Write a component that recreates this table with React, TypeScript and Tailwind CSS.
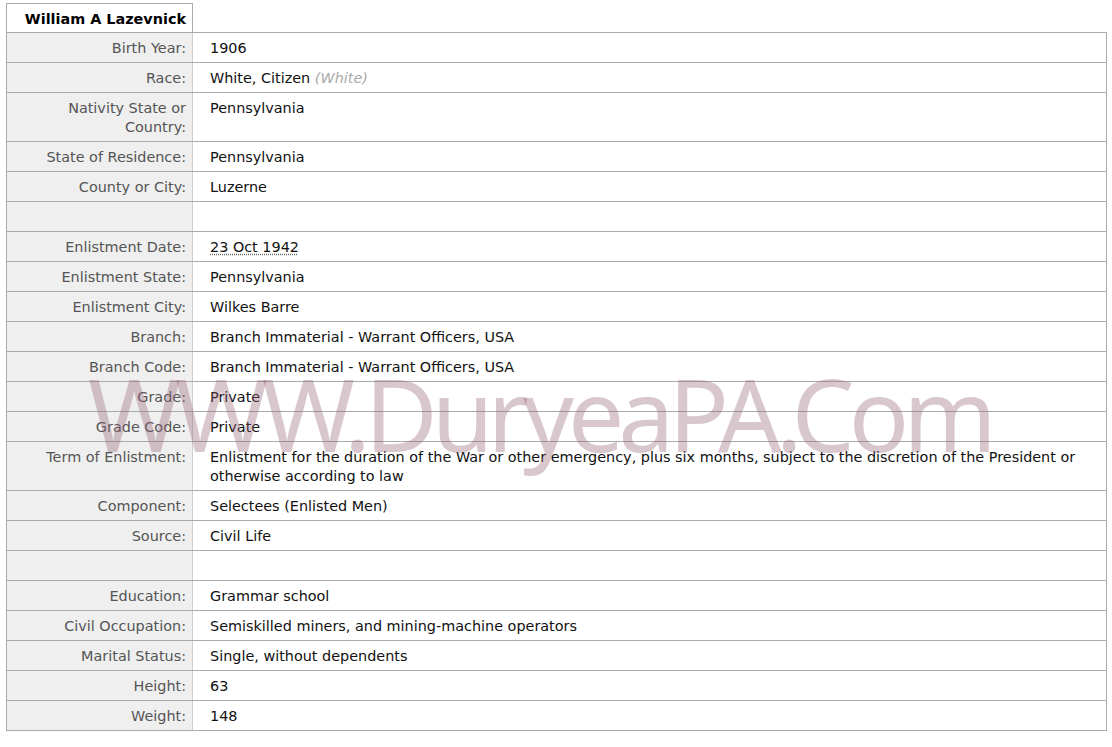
import React from 'react';

type Row = { label?: string; value?: React.ReactNode };

const rows: Row[] = [
  { label: 'Birth Year:', value: '1906' },
  {
    label: 'Race:',
    value: (
      <>
        White, Citizen <span className="italic text-[#aaaaaa]">(White)</span>
      </>
    ),
  },
  { label: 'Nativity State or Country:', value: 'Pennsylvania' },
  { label: 'State of Residence:', value: 'Pennsylvania' },
  { label: 'County or City:', value: 'Luzerne' },
  {},
  {
    label: 'Enlistment Date:',
    value: <span className="underline decoration-dotted decoration-[#666] underline-offset-2">23 Oct 1942</span>,
  },
  { label: 'Enlistment State:', value: 'Pennsylvania' },
  { label: 'Enlistment City:', value: 'Wilkes Barre' },
  { label: 'Branch:', value: 'Branch Immaterial - Warrant Officers, USA' },
  { label: 'Branch Code:', value: 'Branch Immaterial - Warrant Officers, USA' },
  { label: 'Grade:', value: 'Private' },
  { label: 'Grade Code:', value: 'Private' },
  {
    label: 'Term of Enlistment:',
    value:
      'Enlistment for the duration of the War or other emergency, plus six months, subject to the discretion of the President or otherwise according to law',
  },
  { label: 'Component:', value: 'Selectees (Enlisted Men)' },
  { label: 'Source:', value: 'Civil Life' },
  {},
  { label: 'Education:', value: 'Grammar school' },
  { label: 'Civil Occupation:', value: 'Semiskilled miners, and mining-machine operators' },
  { label: 'Marital Status:', value: 'Single, without dependents' },
  { label: 'Height:', value: '63' },
  { label: 'Weight:', value: '148' },
];

const App = () => {
  return (
    <div className="relative min-h-[747px] bg-white pt-[3px] pl-[6px] font-['DejaVu_Sans',sans-serif] text-[14.4px] leading-[19px]">
      <div className="w-[1101px]">
        <div className="flex h-[29px] w-[187px] items-center justify-end border-x border-t border-[#aaaaaa] bg-white pt-[2px] pr-[6px] font-bold text-black">
          William A Lazevnick
        </div>
        <div className="border border-[#aaaaaa]">
          {rows.map((row, i) => (
            <div
              key={i}
              className={`flex ${i < rows.length - 1 ? 'border-b border-[#aaaaaa]' : ''}`}
            >
              <div className="w-[186px] shrink-0 border-r border-[#cfcfcf] bg-[#efefef] pt-[6px] pb-[4px] pr-[6px] pl-2 text-right text-[#555555]">
                {row.label ?? '\u00a0'}
              </div>
              <div className="flex-1 pt-[6px] pb-[4px] pl-[17px] pr-3 text-[#111111]">{row.value ?? '\u00a0'}</div>
            </div>
          ))}
        </div>
      </div>

      {/* watermark */}
      <div className="pointer-events-none absolute left-[88px] top-[353px] select-none font-['Noto_Sans',sans-serif] text-[100px] leading-[120px] tracking-[-6px] text-[rgba(150,100,120,0.36)]">
        WWW.DuryeaPA.Com
      </div>
    </div>
  );
};

export default App;
